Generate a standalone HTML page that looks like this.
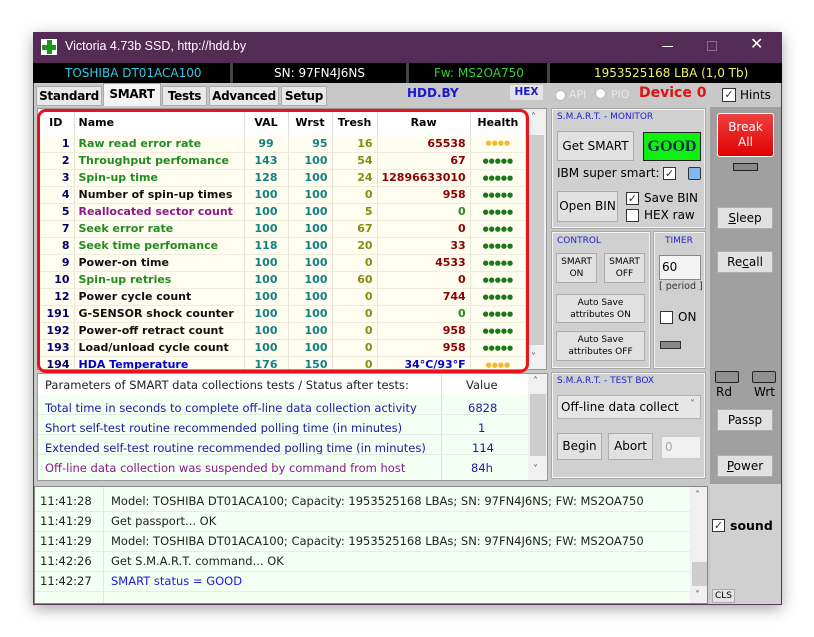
<!DOCTYPE html>
<html><head><meta charset="utf-8"><style>
*{margin:0;padding:0;box-sizing:border-box}
body{width:814px;height:637px;background:#fff;position:relative;overflow:hidden;font-family:"DejaVu Sans","Liberation Sans",sans-serif;font-size:12px}
.a{position:absolute}
#win{left:33px;top:32px;width:749px;height:573px;background:#c8c8c8;border:1px solid #5a3a5c;box-shadow:0 4px 14px rgba(0,0,0,.35)}
.btn{position:absolute;background:#e1e1e1;border:1px solid #adadad;text-align:center;color:#000;font-size:12px}
.grp{position:absolute;border:1px solid #f4f4f4;outline:1px solid #a8a8a8;background:#d0d0d0}
.lbl{position:absolute;font-size:9px;color:#2222cc}
.cb{position:absolute;width:13px;height:13px;border:1px solid #333;background:#fff;font-size:11px;line-height:11px;text-align:center;color:#333}
table{border-collapse:collapse}
#smart td{height:17px;font-weight:bold;font-size:11px;border-right:1px solid #e6e4d4;border-bottom:1px solid #eeecdc;padding:0 4px;white-space:nowrap}
#smart th{height:26px;font-size:11px;font-weight:bold;border-right:1px solid #ddd;padding:0 4px;background:#fff}
.r{text-align:right}.c{text-align:center}
.g{color:#228b22}.k{color:#111}.p{color:#8b1a8b}.b{color:#0000cc}.t{color:#138080}.o{color:#8a8a10}.m{color:#8b0000}.id{color:#00006e;text-align:right}
.dg{color:#1a7a1a;font-size:7px!important;letter-spacing:0px}.dy{color:#f2b830;font-size:7px!important}
.tab{position:absolute;top:86px;height:20px;background:#e8e8e8;border:1px solid #aaa;font-weight:bold;font-size:12px;text-align:center;line-height:18px;letter-spacing:-0.3px}
</style></head><body>
<div id="win" class="a"></div>
<div class="a" style="left:33px;top:32px;width:749px;height:31px;background:#542b55"></div>
<div class="a" style="left:41px;top:39px;width:16px;height:16px;background:#fff"></div>
<div class="a" style="left:47px;top:40px;width:5px;height:14px;background:#1a9a1a"></div>
<div class="a" style="left:42px;top:45px;width:14px;height:5px;background:#1a9a1a"></div>
<div class="a" style="left:65px;top:39px;color:#fff;font-family:'Liberation Sans',sans-serif;font-size:12.5px">Victoria 4.73b SSD, http://hdd.by</div>
<div class="a" style="left:662px;top:46px;width:11px;height:1px;background:#fff"></div>
<div class="a" style="left:707px;top:41px;width:10px;height:10px;border:1px solid #8a6a8c"></div>
<div class="a" style="left:750px;top:34px;color:#fff;font-size:16px">✕</div>
<div class="a" style="left:33px;top:63px;width:749px;height:20px;background:#000"></div>
<div class="a" style="left:230px;top:63px;width:3px;height:20px;background:#444"></div>
<div class="a" style="left:406px;top:63px;width:3px;height:20px;background:#444"></div>
<div class="a" style="left:547px;top:63px;width:3px;height:20px;background:#444"></div>
<div class="a" style="left:65px;top:66px;color:#30c8e8;font-size:12px">TOSHIBA DT01ACA100</div>
<div class="a" style="left:274px;top:66px;color:#fff;font-size:12px">SN: 97FN4J6NS</div>
<div class="a" style="left:434px;top:66px;color:#30d030;font-size:12px">Fw: MS2OA750</div>
<div class="a" style="left:594px;top:66px;color:#f0f070;font-size:12px">1953525168 LBA (1,0 Tb)</div>
<div class="a" style="left:34px;top:83px;width:676px;height:24px;background:#c8c8c8"></div>
<div class="tab" style="left:36px;width:66px">Standard</div>
<div class="tab" style="left:103px;top:83px;width:58px;height:23px;background:#f4f4f4;border-bottom:none;line-height:20px">SMART</div>
<div class="tab" style="left:162px;width:45px">Tests</div>
<div class="tab" style="left:209px;width:70px">Advanced</div>
<div class="tab" style="left:281px;width:46px">Setup</div>
<div class="a" style="left:407px;top:86px;color:#1a1ad0;font-weight:bold;font-size:12px">HDD.BY</div>
<div class="a" style="left:510px;top:85px;width:33px;height:15px;background:#e4e4e4;color:#1a1ad0;font-weight:bold;font-size:10.5px;text-align:center;line-height:14px">HEX</div>
<div class="a" style="left:555px;top:90px;width:11px;height:11px;border-radius:50%;background:#fff;border:1px solid #bbb"></div>
<div class="a" style="left:569px;top:88px;color:#e8e8e8;font-size:11px">API</div>
<div class="a" style="left:595px;top:88px;width:11px;height:11px;border-radius:50%;background:#fff;border:1px solid #bbb"></div>
<div class="a" style="left:611px;top:88px;color:#e8e8e8;font-size:11px">PIO</div>
<div class="a" style="left:639px;top:85px;color:#e01010;font-weight:bold;font-size:14px">Device 0</div>
<div class="cb" style="left:722px;top:88px;width:14px;height:14px">✓</div>
<div class="a" style="left:740px;top:88px;font-size:12px">Hints</div>
<div class="a" style="left:37px;top:108px;width:510px;height:262px;background:#fffdf0;border:1px solid #999;overflow:hidden">
<table id="smart" style="width:488px">
<tr><th style="width:36px" class="c">ID</th><th style="text-align:left;width:170px">Name</th><th style="width:44px">VAL</th><th style="width:44px">Wrst</th><th style="width:45px">Tresh</th><th style="width:91px">Raw</th><th>Health</th></tr>
<tr><td class="id">1</td><td class="g">Raw read error rate</td><td class="t c">99</td><td class="t r">95</td><td class="o r">16</td><td class="m r">65538</td><td class="dy c">●●●●</td></tr>
<tr><td class="id">2</td><td class="g">Throughput perfomance</td><td class="t c">143</td><td class="t r">100</td><td class="o r">54</td><td class="m r">67</td><td class="dg c">●●●●●</td></tr>
<tr><td class="id">3</td><td class="g">Spin-up time</td><td class="t c">128</td><td class="t r">100</td><td class="o r">24</td><td class="m r">12896633010</td><td class="dg c">●●●●●</td></tr>
<tr><td class="id">4</td><td class="k">Number of spin-up times</td><td class="t c">100</td><td class="t r">100</td><td class="o r">0</td><td class="m r">958</td><td class="dg c">●●●●●</td></tr>
<tr><td class="id">5</td><td class="p">Reallocated sector count</td><td class="t c">100</td><td class="t r">100</td><td class="o r">5</td><td class="g r">0</td><td class="dg c">●●●●●</td></tr>
<tr><td class="id">7</td><td class="g">Seek error rate</td><td class="t c">100</td><td class="t r">100</td><td class="o r">67</td><td class="m r">0</td><td class="dg c">●●●●●</td></tr>
<tr><td class="id">8</td><td class="g">Seek time perfomance</td><td class="t c">118</td><td class="t r">100</td><td class="o r">20</td><td class="m r">33</td><td class="dg c">●●●●●</td></tr>
<tr><td class="id">9</td><td class="k">Power-on time</td><td class="t c">100</td><td class="t r">100</td><td class="o r">0</td><td class="m r">4533</td><td class="dg c">●●●●●</td></tr>
<tr><td class="id">10</td><td class="g">Spin-up retries</td><td class="t c">100</td><td class="t r">100</td><td class="o r">60</td><td class="m r">0</td><td class="dg c">●●●●●</td></tr>
<tr><td class="id">12</td><td class="k">Power cycle count</td><td class="t c">100</td><td class="t r">100</td><td class="o r">0</td><td class="m r">744</td><td class="dg c">●●●●●</td></tr>
<tr><td class="id">191</td><td class="k">G-SENSOR shock counter</td><td class="t c">100</td><td class="t r">100</td><td class="o r">0</td><td class="g r">0</td><td class="dg c">●●●●●</td></tr>
<tr><td class="id">192</td><td class="k">Power-off retract count</td><td class="t c">100</td><td class="t r">100</td><td class="o r">0</td><td class="m r">958</td><td class="dg c">●●●●●</td></tr>
<tr><td class="id">193</td><td class="k">Load/unload cycle count</td><td class="t c">100</td><td class="t r">100</td><td class="o r">0</td><td class="m r">958</td><td class="dg c">●●●●●</td></tr>
<tr><td class="id">194</td><td class="b">HDA Temperature</td><td class="t c">176</td><td class="t r">150</td><td class="o r">0</td><td class="b r">34°C/93°F</td><td class="dy c">●●●●</td></tr>
</table>
<div class="a" style="left:488px;top:0;width:20px;height:260px;background:#f0f0f0"></div>
<div class="a" style="left:490px;top:26px;width:16px;height:210px;background:#cdcdcd"></div>
<div class="a" style="left:493px;top:3px;font-size:10px;color:#555">˄</div>
<div class="a" style="left:493px;top:243px;font-size:10px;color:#555">˅</div>
</div>
<div class="a" style="left:37px;top:109px;width:492px;height:264px;border:3px solid #e8141c;border-radius:9px"></div>
<div class="a" style="left:37px;top:373px;width:511px;height:108px;background:#f4fff4;border:1px solid #999;overflow:hidden;font-size:11.5px">
<div class="a" style="left:0;top:0;width:490px;height:21px;background:#fff"></div>
<div class="a" style="left:7px;top:4px;color:#222">Parameters of SMART data collections tests / Status after tests:</div>
<div class="a" style="left:428px;top:4px;color:#222">Value</div>
<div class="a" style="left:403px;top:0;width:1px;height:108px;background:#ddd"></div>
<div class="a" style="left:7px;top:27px;color:#1a1aa0">Total time in seconds to complete off-line data collection activity</div><div class="a" style="left:430px;top:27px;color:#1a1aa0">6828</div>
<div class="a" style="left:7px;top:47px;color:#1a1aa0">Short self-test routine recommended polling time (in minutes)</div><div class="a" style="left:440px;top:47px;color:#1a1aa0">1</div>
<div class="a" style="left:7px;top:67px;color:#1a1aa0">Extended self-test routine recommended polling time (in minutes)</div><div class="a" style="left:434px;top:67px;color:#1a1aa0">114</div>
<div class="a" style="left:7px;top:87px;color:#8b1a8b">Off-line data collection was suspended by command from host</div><div class="a" style="left:433px;top:87px;color:#1a1aa0">84h</div>
<div class="a" style="left:0;top:40px;width:490px;height:1px;background:#e4eee4"></div>
<div class="a" style="left:0;top:60px;width:490px;height:1px;background:#e4eee4"></div>
<div class="a" style="left:0;top:80px;width:490px;height:1px;background:#e4eee4"></div>
<div class="a" style="left:490px;top:0;width:20px;height:108px;background:#f0f0f0"></div>
<div class="a" style="left:492px;top:20px;width:16px;height:62px;background:#cdcdcd"></div>
<div class="a" style="left:495px;top:2px;font-size:10px;color:#555">˄</div>
<div class="a" style="left:495px;top:90px;font-size:10px;color:#555">˅</div>
</div>
<div class="grp" style="left:552px;top:109px;width:153px;height:119px"></div>
<div class="lbl" style="left:557px;top:112px">S.M.A.R.T. - MONITOR</div>
<div class="btn" style="left:557px;top:131px;width:77px;height:30px;line-height:28px">Get SMART</div>
<div class="a" style="left:643px;top:132px;width:58px;height:29px;background:#10f010;border:1px solid #222;color:#0c2a50;font-family:'Liberation Serif',serif;font-weight:bold;font-size:16px;text-align:center;line-height:27px">GOOD</div>
<div class="a" style="left:557px;top:166px;font-size:12px">IBM super smart:</div>
<div class="cb" style="left:663px;top:167px">✓</div>
<div class="a" style="left:688px;top:167px;width:13px;height:13px;background:#80b8f0;border:1px solid #333;border-radius:2px"></div>
<div class="btn" style="left:557px;top:191px;width:61px;height:31px;line-height:29px">Open BIN</div>
<div class="cb" style="left:626px;top:192px">✓</div>
<div class="a" style="left:644px;top:191px;font-size:12px">Save BIN</div>
<div class="cb" style="left:626px;top:209px"></div>
<div class="a" style="left:644px;top:208px;font-size:12px">HEX raw</div>
<div class="grp" style="left:552px;top:232px;width:98px;height:136px"></div>
<div class="lbl" style="left:557px;top:236px">CONTROL</div>
<div class="btn" style="left:556px;top:253px;width:41px;height:30px;font-size:9px;line-height:12px;padding-top:2px">SMART<br>ON</div>
<div class="btn" style="left:604px;top:253px;width:41px;height:30px;font-size:9px;line-height:12px;padding-top:2px">SMART<br>OFF</div>
<div class="btn" style="left:556px;top:294px;width:89px;height:29px;font-size:9px;line-height:12px;padding-top:2px">Auto Save<br>attributes ON</div>
<div class="btn" style="left:556px;top:331px;width:89px;height:30px;font-size:9px;line-height:12px;padding-top:2px">Auto Save<br>attributes OFF</div>
<div class="grp" style="left:654px;top:232px;width:51px;height:136px"></div>
<div class="lbl" style="left:665px;top:236px">TIMER</div>
<div class="a" style="left:659px;top:255px;width:42px;height:25px;background:#f4f4f4;border:1px solid #888;font-size:12px;padding:4px 2px">60</div>
<div class="a" style="left:659px;top:281px;font-size:9.5px;color:#333">[ period ]</div>
<div class="cb" style="left:660px;top:311px"></div>
<div class="a" style="left:678px;top:310px;font-size:12px">ON</div>
<div class="a" style="left:660px;top:341px;width:21px;height:8px;background:#888;border:1px solid #333"></div>
<div class="grp" style="left:552px;top:373px;width:153px;height:105px"></div>
<div class="lbl" style="left:557px;top:376px">S.M.A.R.T. - TEST BOX</div>
<div class="a" style="left:557px;top:395px;width:144px;height:24px;background:#e6e6e6;border:1px solid #b4b4b4;font-size:12px;padding:4px 3px">Off-line data collect<span style="position:absolute;right:5px;top:3px;color:#666;font-size:10px">˅</span></div>
<div class="btn" style="left:557px;top:433px;width:45px;height:27px;line-height:25px">Begin</div>
<div class="btn" style="left:608px;top:433px;width:45px;height:27px;line-height:25px">Abort</div>
<div class="a" style="left:661px;top:436px;width:40px;height:23px;background:#f0f0f0;border:1px solid #ccc;color:#aaa;font-size:12px;padding:3px 3px">0</div>
<div class="a" style="left:710px;top:107px;width:71px;height:377px;background:#a0a0a0"></div>
<div class="a" style="left:717px;top:113px;width:57px;height:44px;background:linear-gradient(#f04040,#e00000);border:1px solid #fff;border-radius:3px;color:#fff;text-align:center;font-size:12px;line-height:15px;padding-top:6px">Break<br>All</div>
<div class="a" style="left:733px;top:163px;width:25px;height:8px;background:#888;border:1px solid #222"></div>
<div class="btn" style="left:717px;top:207px;width:56px;height:22px;line-height:20px"><u>S</u>leep</div>
<div class="btn" style="left:717px;top:251px;width:56px;height:22px;line-height:20px">Re<u>c</u>all</div>
<div class="a" style="left:715px;top:371px;width:24px;height:12px;background:#909090;border:1px solid #222;border-radius:2px"></div>
<div class="a" style="left:752px;top:371px;width:24px;height:12px;background:#909090;border:1px solid #222;border-radius:2px"></div>
<div class="a" style="left:716px;top:385px;font-size:12px">Rd</div>
<div class="a" style="left:754px;top:385px;font-size:12px">Wrt</div>
<div class="btn" style="left:717px;top:409px;width:56px;height:22px;line-height:20px">Passp</div>
<div class="btn" style="left:717px;top:455px;width:56px;height:22px;line-height:20px"><u>P</u>ower</div>
<div class="a" style="left:710px;top:484px;width:71px;height:120px;background:#d0d0d0"></div>
<div class="cb" style="left:712px;top:519px">✓</div>
<div class="a" style="left:730px;top:518px;font-weight:bold;font-size:12.5px">sound</div>
<div class="a" style="left:712px;top:589px;width:23px;height:14px;background:#e4e4e4;border:1px solid #aaa;font-size:9px;line-height:12px;text-align:center">CLS</div>
<div class="a" style="left:34px;top:486px;width:674px;height:118px;background:#f4fff4;border:1px solid #888;overflow:hidden;font-size:11.5px;color:#222">
<div class="a" style="left:68px;top:0;width:1px;height:118px;background:#e0e8e0"></div>
<div class="a" style="left:0;top:24px;width:656px;height:1px;background:#e4eee4"></div>
<div class="a" style="left:0;top:44px;width:656px;height:1px;background:#e4eee4"></div>
<div class="a" style="left:0;top:64px;width:656px;height:1px;background:#e4eee4"></div>
<div class="a" style="left:0;top:84px;width:656px;height:1px;background:#e4eee4"></div>
<div class="a" style="left:0;top:104px;width:656px;height:1px;background:#e4eee4"></div>
<div class="a" style="left:5px;top:7px">11:41:28</div><div class="a" style="left:76px;top:7px">Model: TOSHIBA DT01ACA100; Capacity: 1953525168 LBAs; SN: 97FN4J6NS; FW: MS2OA750</div>
<div class="a" style="left:5px;top:27px">11:41:29</div><div class="a" style="left:76px;top:27px">Get passport... OK</div>
<div class="a" style="left:5px;top:47px">11:41:29</div><div class="a" style="left:76px;top:47px">Model: TOSHIBA DT01ACA100; Capacity: 1953525168 LBAs; SN: 97FN4J6NS; FW: MS2OA750</div>
<div class="a" style="left:5px;top:67px">11:42:26</div><div class="a" style="left:76px;top:67px">Get S.M.A.R.T. command... OK</div>
<div class="a" style="left:5px;top:87px">11:42:27</div><div class="a" style="left:76px;top:87px;color:#1a1ae0">SMART status = GOOD</div>
<div class="a" style="left:655px;top:0;width:19px;height:118px;background:#f0f0f0"></div>
<div class="a" style="left:657px;top:75px;width:15px;height:24px;background:#cdcdcd"></div>
<div class="a" style="left:660px;top:3px;font-size:10px;color:#555">˄</div>
<div class="a" style="left:660px;top:103px;font-size:10px;color:#555">˅</div>
</div>
</body></html>
